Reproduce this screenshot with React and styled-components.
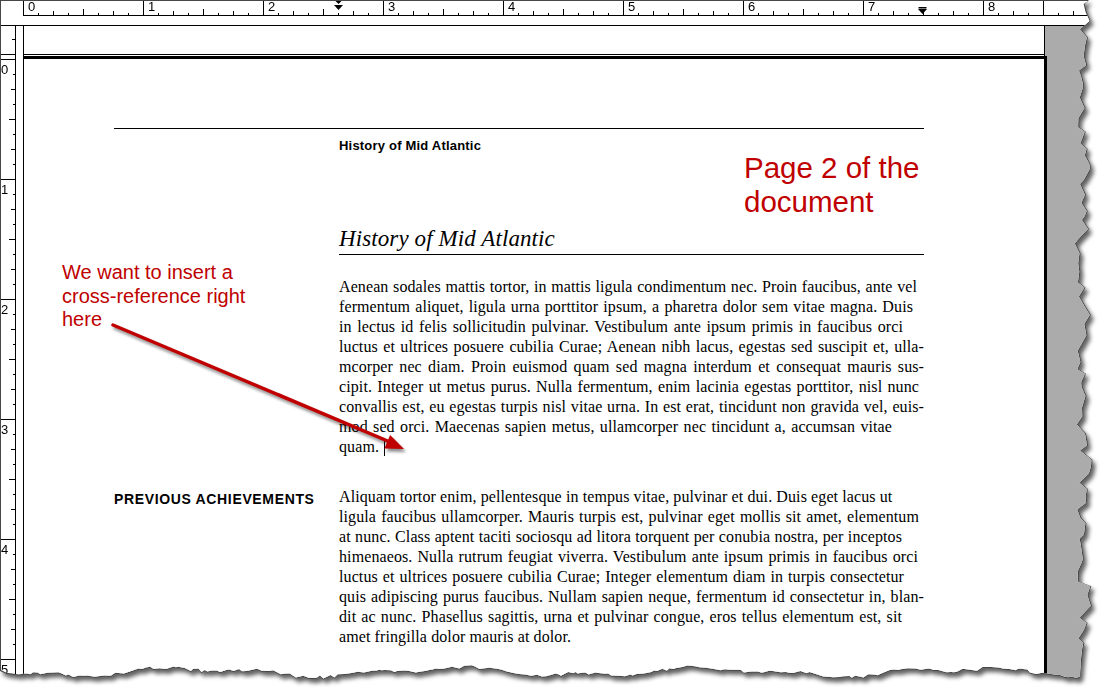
import React from 'react';
import styled, { createGlobalStyle } from 'styled-components';

const RED = '#c00000';

const GlobalStyle = createGlobalStyle`
  html, body {
    margin: 0;
    padding: 0;
    background: #fff;
  }
  body {
    width: 1112px;
    height: 697px;
    overflow: hidden;
    font-family: 'Liberation Sans', Arial, sans-serif;
  }
`;

// torn paper edge, built once from a fixed seed so it never changes
const seeded = (seed) => () => {
  seed = (seed + 0x6d2b79f5) | 0;
  let t = Math.imul(seed ^ (seed >>> 15), 1 | seed);
  t = (t + Math.imul(t ^ (t >>> 7), 61 | t)) ^ t;
  return ((t ^ (t >>> 14)) >>> 0) / 4294967296;
};

const buildEdge = () => {
  const rnd = seeded(11);
  const right = [];
  for (let y = 4; y < 664; y += 4 + rnd() * 8) {
    right.push([1084 + Math.sin(y / 23) * 2.5 + (rnd() - 0.5) * 13, y]);
  }
  const bottom = [];
  for (let x = 1080; x > 4; x -= 2 + rnd() * 6) {
    bottom.push([
      x,
      673 + Math.sin(x / 41) * 3.5 + Math.sin(x / 17 + 2) * 2 + (rnd() - 0.5) * 3.5,
    ]);
  }
  return { right, bottom };
};

const toPoly = (pts) =>
  `polygon(${pts.map(([x, y]) => `${x.toFixed(1)}px ${y.toFixed(1)}px`).join(', ')})`;

const edge = buildEdge();
const OUTER = toPoly([[0, 0], [1089, 0], ...edge.right, ...edge.bottom, [0, 671]]);
const INNER = toPoly([
  [1, 1],
  [1088, 1],
  ...edge.right.map(([x, y]) => [x - 1, y]),
  ...edge.bottom.map(([x, y]) => [x, y - 1]),
  [1, 670],
]);

const rulerTicks = (dir, withEdge) => {
  const layers = [
    `repeating-linear-gradient(${dir}, transparent 0 14px, #000 14px 15px)`,
    `repeating-linear-gradient(${dir}, transparent 0 29px, #000 29px 30px)`,
    `linear-gradient(${dir}, transparent 59px, #000 59px 60px, transparent 60px)`,
  ];
  if (withEdge) {
    layers.push(`linear-gradient(${dir}, transparent 59px, #000 59px 60px, transparent 60px)`);
  }
  return layers.join(', ');
};

const Stage = styled.div`
  width: 1112px;
  height: 697px;
  overflow: hidden;
  background: #fff;
`;

const Torn = styled.div`
  width: 1100px;
  height: 690px;
  filter: drop-shadow(3px 4px 2px rgba(0, 0, 0, 0.62));
`;

const Rim = styled.div`
  width: 100%;
  height: 100%;
  background: #474747;
  clip-path: ${({ $clip }) => $clip};
`;

const Shot = styled.div`
  width: 100%;
  height: 100%;
  background: #fff;
  clip-path: ${({ $clip }) => $clip};
  display: grid;
  grid-template-columns: 23px 1fr;
  grid-template-rows: 16px 9px 1fr;
`;

const Corner = styled.div`
  background: #fff;
`;

const Spacer = styled.div`
  grid-column: 1 / -1;
  background: #fff;
`;

const HRuler = styled.div`
  position: relative;
  display: flex;
  border-bottom: 1px solid #000;
  overflow: hidden;
`;

const HInch = styled.div`
  flex: 0 0 120px;
  box-sizing: border-box;
  border-left: 1px solid #000;
  padding: 0 0 0 4px;
  font: 13px/13px 'Liberation Sans', Arial, sans-serif;
  color: #000;
  background-image: ${({ $edge }) => rulerTicks('90deg', $edge)};
  background-size: 100% 2px, 100% 4px, 100% 6px, 100% 100%;
  background-position: 0 100%;
  background-repeat: no-repeat;
`;

const Marker = styled.svg`
  position: absolute;
  top: 0;
  left: ${({ $x }) => $x}px;
`;

const Side = styled.div`
  display: flex;
  border-top: 1px solid #000;
  overflow: hidden;
`;

const VRuler = styled.div`
  display: flex;
  flex-direction: column;
  width: 16px;
  box-sizing: border-box;
  border-right: 1px solid #000;
  overflow: hidden;
`;

const VLead = styled.div`
  flex: 0 0 33px;
  background-image: linear-gradient(180deg, transparent 28px, #000 28px 29px, transparent 29px),
    linear-gradient(180deg, transparent 13px, #000 13px 14px, transparent 14px);
  background-size: 100% 100%, 3px 100%;
  background-position: 0 0, 100% 0;
  background-repeat: no-repeat;
`;

const VInch = styled.div`
  flex: 0 0 120px;
  box-sizing: border-box;
  border-top: 1px solid #000;
  padding: 3px 0 0 1px;
  font: 13px/13px 'Liberation Sans', Arial, sans-serif;
  color: #000;
  background-image: ${() => rulerTicks('180deg', false)};
  background-size: 2px 100%, 4px 100%, 6px 100%;
  background-position: 100% 0;
  background-repeat: no-repeat;
`;

const Workspace = styled.div`
  display: flex;
  flex-direction: column;
  background: #ababab;
  border-top: 1px solid #000;
  overflow: hidden;
`;

const HeaderBand = styled.div`
  flex: 0 0 30px;
  width: 1022px;
  box-sizing: border-box;
  background: #fff;
  border-left: 1px solid #000;
  border-right: 1px solid #000;
  box-shadow: inset 0 -1px 0 #fff, inset 0 -2px 0 #000;
`;

const Page = styled.div`
  position: relative;
  flex: 1;
  width: 1024px;
  box-sizing: border-box;
  background: #fff;
  border-left: 1px solid #000;
  border-top: 3px solid #000;
  border-right: 3px solid #000;
  padding: 69px 120px 0 90px;
`;

const TopRule = styled.div`
  border-top: 1px solid #000;
`;

const Section = styled.div`
  display: grid;
  grid-template-columns: 225px 585px;
  margin-top: ${({ $gap }) => $gap}px;
`;

const RunningHead = styled.div`
  grid-column: 2;
  font: bold 13px/16px 'Liberation Sans', Arial, sans-serif;
  letter-spacing: 0.2px;
  color: #000;
`;

const Title = styled.h1`
  grid-column: 2;
  margin: 0;
  padding-bottom: 2px;
  border-bottom: 1px solid #000;
  font: italic 23px/26px 'Liberation Serif', 'Times New Roman', serif;
  font-weight: normal;
  letter-spacing: 0.1px;
  color: #000;
`;

const Label = styled.div`
  grid-column: 1;
  padding-top: 2px;
  font: bold 14px/20px 'Liberation Sans', Arial, sans-serif;
  letter-spacing: 0.65px;
  color: #000;
`;

const Body = styled.div`
  grid-column: 2;
  font: 16px/20px 'Liberation Serif', 'Times New Roman', serif;
  letter-spacing: 0.1px;
  color: #000;
`;

const Line = styled.div`
  width: max-content;
  min-width: ${({ $w }) => $w}px;
  text-align: justify;
  text-align-last: ${({ $last }) => ($last ? 'left' : 'justify')};
`;

const Caret = styled.span`
  display: inline-block;
  width: 1px;
  height: 17px;
  margin-left: 5px;
  vertical-align: -4px;
  background: #000;
`;

const Note = styled.div`
  position: absolute;
  left: ${({ $x }) => $x}px;
  top: ${({ $y }) => $y}px;
  color: ${RED};
  font-family: 'Liberation Sans', Arial, sans-serif;
  font-size: ${({ $size }) => $size}px;
  line-height: ${({ $lh }) => $lh}px;
  white-space: nowrap;
`;

const ArrowArt = styled.svg`
  position: absolute;
  left: 76px;
  top: 256px;
  overflow: visible;
`;

const firstPara = [
  ['Aenean sodales mattis tortor, in mattis ligula condimentum nec. Proin faucibus, ante vel', 578],
  ['fermentum aliquet, ligula urna porttitor ipsum, a pharetra dolor sem vitae magna. Duis', 574],
  ['in lectus id felis sollicitudin pulvinar. Vestibulum ante ipsum primis in faucibus orci', 564],
  ['luctus et ultrices posuere cubilia Curae; Aenean nibh lacus, egestas sed suscipit et, ulla-', 585],
  ['mcorper nec diam. Proin euismod quam sed magna interdum et consequat mauris sus-', 585],
  ['cipit. Integer ut metus purus. Nulla fermentum, enim lacinia egestas porttitor, nisl nunc', 580],
  ['convallis est, eu egestas turpis nisl vitae urna. In est erat, tincidunt non gravida vel, euis-', 585],
  ['mod sed orci. Maecenas sapien metus, ullamcorper nec tincidunt a, accumsan vitae', 553],
];

const secondPara = [
  ['Aliquam tortor enim, pellentesque in tempus vitae, pulvinar et dui. Duis eget lacus ut', 540],
  ['ligula faucibus ullamcorper. Mauris turpis est, pulvinar eget mollis sit amet, elementum', 580],
  ['at nunc. Class aptent taciti sociosqu ad litora torquent per conubia nostra, per inceptos', 563],
  ['himenaeos. Nulla rutrum feugiat viverra. Vestibulum ante ipsum primis in faucibus orci', 579],
  ['luctus et ultrices posuere cubilia Curae; Integer elementum diam in turpis consectetur', 565],
  ['quis adipiscing purus faucibus. Nullam sapien neque, fermentum id consectetur in, blan-', 585],
  ['dit ac nunc. Phasellus sagittis, urna et pulvinar congue, eros tellus elementum est, sit', 563],
];

const Paragraph = ({ lines, children }) => (
  <Body>
    {lines.map(([text, w]) => (
      <Line key={text} $w={w}>
        {text}
      </Line>
    ))}
    <Line $last>{children}</Line>
  </Body>
);

const Arrow = () => (
  <ArrowArt width='340' height='160' viewBox='100 315 340 160'>
    <defs>
      <filter id='arrowBlur' x='-10%' y='-10%' width='120%' height='120%'>
        <feGaussianBlur stdDeviation='1.6' />
      </filter>
    </defs>
    <g transform='translate(2 3)' fill='#000' stroke='#000' opacity='0.45' filter='url(#arrowBlur)'>
      <line x1='113' y1='325' x2='390' y2='442' strokeWidth='3.5' strokeLinecap='round' />
      <polygon points='404,449 390.1,435 384.4,448.6' strokeWidth='0' />
    </g>
    <line x1='113' y1='325' x2='390' y2='442' stroke={RED} strokeWidth='3.5' strokeLinecap='round' />
    <polygon points='404,449 390.1,435 384.4,448.6' fill={RED} />
  </ArrowArt>
);

const App = () => (
  <Stage>
    <GlobalStyle />
    <Torn>
      <Rim $clip={OUTER}>
        <Shot $clip={INNER}>
          <Corner />
          <HRuler>
            {[0, 1, 2, 3, 4, 5, 6, 7, 8].map((n) => (
              <HInch key={n} $edge={n === 8}>
                {n}
              </HInch>
            ))}
            <Marker $x={311} width='9' height='13' viewBox='0 0 9 13'>
              <polygon points='1,0.5 8,0.5 4.5,4' fill='#000' />
              <polygon points='0,5 9,5 4.5,10' fill='#000' />
            </Marker>
            <Marker $x={895} width='9' height='15' viewBox='0 0 9 15'>
              <rect x='0.5' y='7' width='8' height='1.5' fill='#000' />
              <polygon points='0,9 9,9 4.5,14' fill='#000' />
            </Marker>
          </HRuler>
          <Spacer />
          <Side>
            <VRuler>
              <VLead />
              {[0, 1, 2, 3, 4, 5].map((n) => (
                <VInch key={n}>{n}</VInch>
              ))}
            </VRuler>
          </Side>
          <Workspace>
            <HeaderBand />
            <Page>
              <TopRule />
              <Section $gap={9}>
                <RunningHead>History of Mid Atlantic</RunningHead>
              </Section>
              <Section $gap={72}>
                <Title>History of Mid Atlantic</Title>
              </Section>
              <Section $gap={22}>
                <Paragraph lines={firstPara}>
                  quam.
                  <Caret />
                </Paragraph>
              </Section>
              <Section $gap={30}>
                <Label>PREVIOUS ACHIEVEMENTS</Label>
                <Paragraph lines={secondPara}>amet fringilla dolor mauris at dolor.</Paragraph>
              </Section>

              <Note $x={720} $y={92} $size={29.5} $lh={34}>
                Page 2 of the
                <br />
                document
              </Note>
              <Note $x={38} $y={202} $size={20} $lh={23.5}>
                We want to insert a
                <br />
                cross-reference right
                <br />
                here
              </Note>
              <Arrow />
            </Page>
          </Workspace>
        </Shot>
      </Rim>
    </Torn>
  </Stage>
);

export default App;
